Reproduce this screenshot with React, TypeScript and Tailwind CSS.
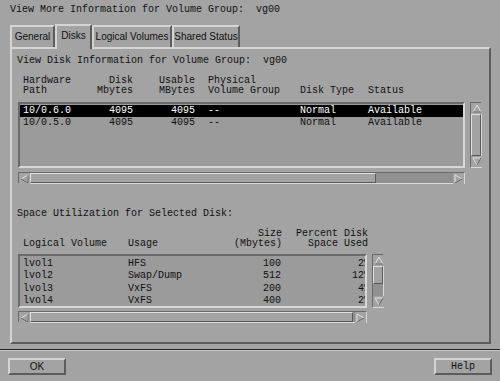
import React from "react";

function Arrow({ dir }: { dir: "up" | "down" | "left" | "right" }) {
  const pts: Record<string, string> = {
    up: "1,8 5,1 9,8",
    down: "1,1 5,8 9,1",
    left: "8,1 1,5 8,9",
    right: "1,1 8,5 1,9",
  };
  return (
    <div className="w-[11px] h-[11px] flex items-center justify-center bg-[#a3a3a3]">
      <svg width="10" height="10" viewBox="0 0 10 10">
        <polygon points={pts[dir]} fill="#a3a3a3" stroke="#e0e0e0" strokeWidth="1" />
        <polyline
          points={dir === "up" ? "9,8 1,8" : dir === "down" ? "5,8 9,1" : dir === "left" ? "1,5 8,9 8,1" : "1,9 8,5"}
          fill="none"
          stroke="#5a5a5a"
          strokeWidth="1"
        />
      </svg>
    </div>
  );
}

function HScroll({ thumbEnd }: { thumbEnd: number }) {
  return (
    <div className="h-[12px] flex border border-t-[#6a6a6a] border-l-[#6a6a6a] border-b-[#d8d8d8] border-r-[#d8d8d8] bg-[#909090]">
      <Arrow dir="left" />
      <div className="flex-1 flex">
        <div
          className="h-full bg-[#a3a3a3] border border-t-[#e0e0e0] border-l-[#e0e0e0] border-b-[#5a5a5a] border-r-[#5a5a5a]"
          style={{ width: thumbEnd }}
        />
      </div>
      <Arrow dir="right" />
    </div>
  );
}

function VScroll({ thumbTop, thumbH }: { thumbTop: number; thumbH: number }) {
  return (
    <div className="w-[12px] h-full flex flex-col border border-t-[#6a6a6a] border-l-[#6a6a6a] border-b-[#d8d8d8] border-r-[#d8d8d8] bg-[#909090]">
      <Arrow dir="up" />
      <div className="flex-1 flex flex-col">
        <div style={{ height: thumbTop }} />
        <div
          className="w-full bg-[#a3a3a3] border border-t-[#e0e0e0] border-l-[#e0e0e0] border-b-[#5a5a5a] border-r-[#5a5a5a]"
          style={{ height: thumbH }}
        />
      </div>
      <Arrow dir="down" />
    </div>
  );
}

const sunken =
  "border-2 border-t-[#6a6a6a] border-l-[#6a6a6a] border-b-[#d8d8d8] border-r-[#d8d8d8]";

export default function App() {
  const disks = [
    ["10/0.6.0", "4095", "4095", "--", "Normal", "Available"],
    ["10/0.5.0", "4095", "4095", "--", "Normal", "Available"],
  ];
  const lvols = [
    ["lvol1", "HFS", "100", "2%"],
    ["lvol2", "Swap/Dump", "512", "12%"],
    ["lvol3", "VxFS", "200", "4%"],
    ["lvol4", "VxFS", "400", "2%"],
  ];
  return (
    <div
      className="w-[500px] h-[381px] bg-[#a3a3a3] text-[10px] leading-[10px] text-[#111] flex flex-col overflow-hidden"
      style={{ fontFamily: '"Liberation Mono", "DejaVu Sans Mono", monospace' }}
    >
      {/* Title */}
      <div className="h-[22px] pl-[10px] pt-[5px] whitespace-pre">
        View More Information for Volume Group:  vg00
      </div>

      {/* Tabs */}
      <div
        className="flex items-end pl-[10px] h-[25px] text-[10px]"
        style={{ fontFamily: '"Liberation Sans", Arial, sans-serif' }}
      >
        <div className="h-[22px] w-[45px] flex items-center justify-center border-2 border-b-0 border-t-[#d4d4d4] border-l-[#d4d4d4] border-r-[#5c5c5c]">
          General
        </div>
        <div className="h-[25px] w-[37px] -mb-[2px] flex items-start pt-[5px] justify-center border-2 border-b-0 border-t-[#d4d4d4] border-l-[#d4d4d4] border-r-[#5c5c5c] bg-[#a3a3a3] relative z-10">
          Disks
        </div>
        <div className="h-[22px] w-[80px] flex items-center justify-center border-2 border-b-0 border-t-[#d4d4d4] border-l-[#d4d4d4] border-r-[#5c5c5c]">
          Logical Volumes
        </div>
        <div className="h-[22px] w-[68px] flex items-center justify-center border-2 border-b-0 border-t-[#d4d4d4] border-l-[#d4d4d4] border-r-[#5c5c5c]">
          Shared Status
        </div>
      </div>

      {/* Panel */}
      <div className="ml-[10px] w-[481px] h-[297px] border-2 border-t-[#d4d4d4] border-l-[#d4d4d4] border-b-[#5c5c5c] border-r-[#5c5c5c] flex flex-col pl-[5px]">
        <div className="mt-[7px] whitespace-pre">View Disk Information for Volume Group:  vg00</div>

        {/* Headers */}
        <div className="mt-[10px] flex pl-[6px]">
          <div className="w-[70px]">Hardware<br />Path</div>
          <div className="w-[40px] text-right">Disk<br />Mbytes</div>
          <div className="w-[62px] text-right">Usable<br />MBytes</div>
          <div className="w-[13px]" />
          <div className="w-[92px]">Physical<br />Volume Group</div>
          <div className="w-[68px]"><br />Disk Type</div>
          <div><br />Status</div>
        </div>

        {/* List 1 */}
        <div className="mt-[6px] flex h-[66px] ml-[1px]">
          <div className={`w-[447px] h-full ${sunken} bg-[#9b9b9b] pt-[1px]`}>
            {disks.map((r, i) => (
              <div
                key={i}
                className={`flex h-[12px] items-center pl-[3px] ${i === 0 ? "bg-black text-white" : ""}`}
              >
                <div className="w-[70px]">{r[0]}</div>
                <div className="w-[40px] text-right">{r[1]}</div>
                <div className="w-[62px] text-right">{r[2]}</div>
                <div className="w-[13px]" />
                <div className="w-[92px]">{r[3]}</div>
                <div className="w-[68px]">{r[4]}</div>
                <div>{r[5]}</div>
              </div>
            ))}
          </div>
          <div className="ml-[5px] h-full">
            <VScroll thumbTop={0} thumbH={42} />
          </div>
        </div>
        <div className="mt-[4px] w-[447px] ml-[1px]">
          <HScroll thumbEnd={346} />
        </div>

        <div className="mt-[25px]">Space Utilization for Selected Disk:</div>

        {/* Headers 2 */}
        <div className="mt-[10px] flex pl-[6px]">
          <div className="w-[105px]"><br />Logical Volume</div>
          <div className="w-[70px]"><br />Usage</div>
          <div className="w-[84px] text-right">Size<br />(Mbytes)</div>
          <div className="w-[86px] text-right">Percent Disk<br />Space Used</div>
        </div>

        <div className="mt-[5px] flex h-[54px] ml-[1px]">
          <div className={`w-[349px] h-full ${sunken} bg-[#9b9b9b] overflow-hidden pt-[2px]`}>
            {lvols.map((r, i) => (
              <div key={i} className="flex h-[12.3px] items-center pl-[3px] whitespace-nowrap">
                <div className="w-[105px] shrink-0">{r[0]}</div>
                <div className="w-[70px] shrink-0">{r[1]}</div>
                <div className="w-[83px] shrink-0 text-right">{r[2]}</div>
                <div className="w-[89px] shrink-0 text-right">{r[3]}</div>
              </div>
            ))}
          </div>
          <div className="ml-[5px] h-full">
            <VScroll thumbTop={0} thumbH={18} />
          </div>
        </div>
        <div className="mt-[3px] w-[349px] ml-[1px]">
          <HScroll thumbEnd={323} />
        </div>
      </div>

      {/* Separator */}
      <div className="mt-[5px] h-[2px] border-t border-t-[#222] border-b border-b-[#c8c8c8]" />

      {/* Buttons */}
      <div className="flex justify-between px-[8px] mt-[7px]">
        <div
          className="w-[58px] h-[17px] flex items-center justify-center border-2 border-t-[#d4d4d4] border-l-[#d4d4d4] border-b-[#5c5c5c] border-r-[#5c5c5c]"
          style={{ fontFamily: '"Liberation Sans", Arial, sans-serif' }}
        >
          OK
        </div>
        <div className="w-[58px] h-[17px] flex items-center justify-center border-2 border-t-[#d4d4d4] border-l-[#d4d4d4] border-b-[#5c5c5c] border-r-[#5c5c5c]">
          Help
        </div>
      </div>
    </div>
  );
}
